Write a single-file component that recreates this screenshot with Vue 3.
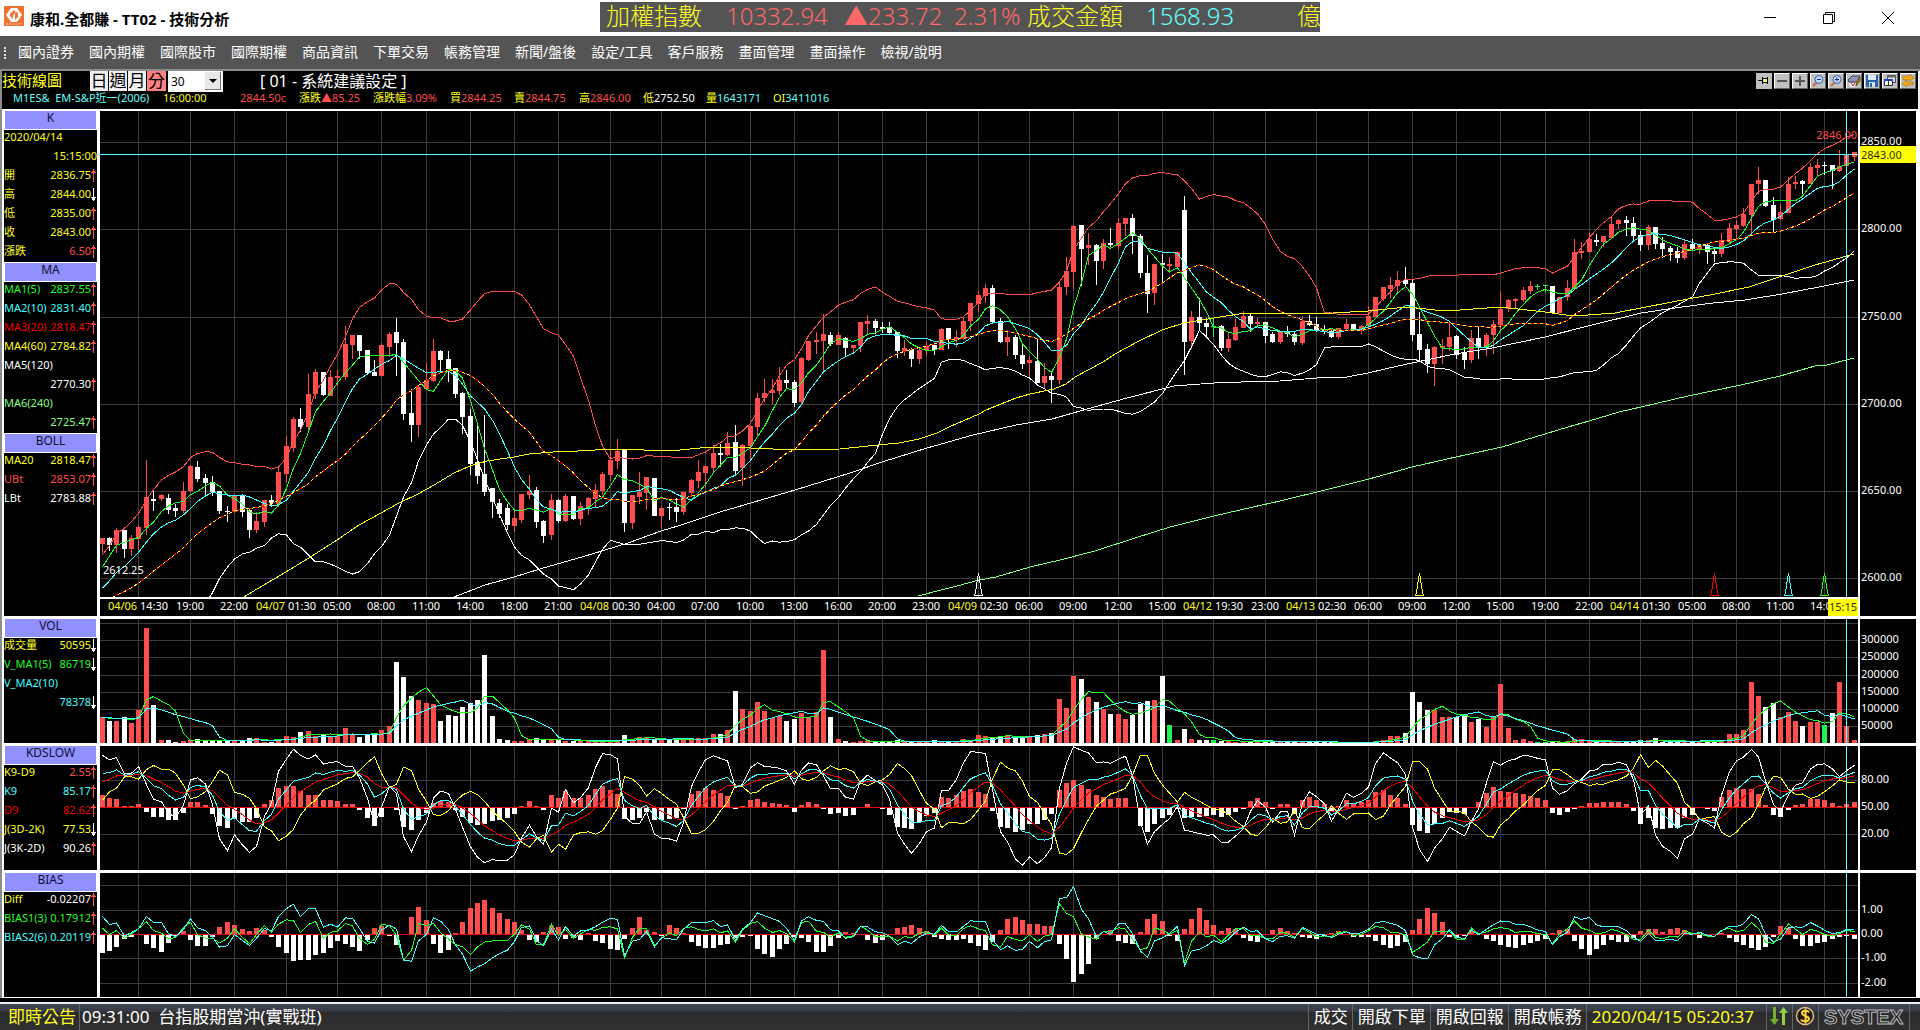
<script setup>
import { ref } from 'vue'

const menus = ['國內證券', '國內期權', '國際股市', '國際期權', '商品資訊', '下單交易', '帳務管理', '新聞/盤後', '設定/工具', '客戶服務', '畫面管理', '畫面操作', '檢視/說明']
const periods = ['日', '週', '月', '分']
const period = ref('分')
const minutes = ref('30')

const quote = [
  { label: '', value: 'M1ES&  EM-S&P近一(2006)', tone: 'aqua' },
  { label: '16:00:00', value: '', tone: 'red' },
  { label: '', value: '2844.50c', tone: 'red' },
  { label: '漲跌', value: '▲85.25', tone: 'red' },
  { label: '漲跌幅', value: '3.09%', tone: 'red' },
  { label: '買', value: '2844.25', tone: 'red' },
  { label: '賣', value: '2844.75', tone: 'red' },
  { label: '高', value: '2846.00', tone: 'red' },
  { label: '低', value: '2752.50', tone: 'white' },
  { label: '量', value: '1643171', tone: 'aqua' },
  { label: 'OI', value: '3411016', tone: 'aqua' },
]

// label, value, label tone, value tone, arrow
const kRows = [
  ['2020/04/14', '', 'yellow', 'yellow', ''],
  ['', '15:15:00', 'yellow', 'yellow', ''],
  ['開', '2836.75', 'yellow', 'yellow', 'up'],
  ['高', '2844.00', 'yellow', 'yellow', 'down'],
  ['低', '2835.00', 'yellow', 'yellow', 'up'],
  ['收', '2843.00', 'yellow', 'yellow', 'up'],
  ['漲跌', '6.50', 'yellow', 'red', 'up'],
]
const maRows = [
  ['MA1(5)', '2837.55', 'green', 'green', 'up'],
  ['MA2(10)', '2831.40', 'cyan', 'cyan', 'up'],
  ['MA3(20)', '2818.47', 'pure', 'pure', 'up'],
  ['MA4(60)', '2784.82', 'yellow', 'yellow', 'up'],
  ['MA5(120)', '', 'white', 'white', ''],
  ['', '2770.30', 'white', 'white', 'up'],
  ['MA6(240)', '', 'mint', 'mint', ''],
  ['', '2725.47', 'mint', 'mint', 'up'],
]
const bollRows = [
  ['MA20', '2818.47', 'yellow', 'yellow', 'up'],
  ['UBt', '2853.07', 'red', 'red', 'up'],
  ['LBt', '2783.88', 'white', 'white', 'up'],
]
const volRows = [
  ['成交量', '50595', 'yellow', 'yellow', 'down'],
  ['V_MA1(5)', '86719', 'green', 'green', 'down'],
  ['V_MA2(10)', '', 'cyan', 'cyan', ''],
  ['', '78378', 'cyan', 'cyan', 'down'],
]
const kdRows = [
  ['K9-D9', '2.55', 'yellow', 'red', 'up'],
  ['K9', '85.17', 'cyan', 'cyan', 'up'],
  ['D9', '82.62', 'pure', 'pure', 'up'],
  ['J(3D-2K)', '77.53', 'yellow', 'yellow', 'down'],
  ['J(3K-2D)', '90.26', 'white', 'white', 'up'],
]
const biasRows = [
  ['Diff', '-0.02207', 'yellow', 'white', 'up'],
  ['BIAS1(3)', '0.17912', 'green', 'green', 'up'],
  ['BIAS2(6)', '0.20119', 'cyan', 'cyan', 'up'],
]

// tone, high, body top, body bottom, low (thirds of a pixel, from the chunk's base)
const chunks = [
  [750, `r 865 865 881 910,w 860 865 884 902,r 835 840 884 908,w 840 840 896 923,r 855 864 896 918,r 825 831 866 900,
r 630 741 833 855,w 720 747 752 783,r 731 735 747 752,w 732 744 780 792,w 762 774 783 800,r 696 723 783 788,
r 645 648 723 725,w 632 651 687 696,w 672 684 699 737,w 678 697 725 737,w 723 723 783 792,w 768 782 786 815,
r 733 735 785 790,w 732 734 786 800,w 778 780 839 864,r 787 812 839 848,r 750 750 816 830,w 735 750 760 770,
r 652 666 762 770,r 558 588 671 695,r 501 507 594 606,w 474 507 531 545,r 372 432 531 543,r 357 366 432 447,
w 366 366 434 438,r 360 381 437 438,r 360 378 383 408,r 228 282 381 390,r 255 255 285 326,w 255 255 303 326,
w 300 300 368 372,w 330 366 377 378,r 279 285 378 380,r 246 252 291 320,w 204 246 279 378,w 267 276 491 510,
w 417 489 525 576,r 408 411 525 560,r 339 390 416 417,r 267 303 393 396,w 300 303 330 363,w 303 327 357 396,
w 354 354 432 444,w 426 429 501 552,w 477 498 641 675,w 520 636 678 702,w 495 672 725 738,w 714 714 756 804,
w 747 759 792 803,w 762 774 825 840,r 782 804 828 846,r 732 732 810 819,r 675 723 735 747,w 711 720 816 834,
w 810 813 857 879,r 732 750 855 870,w 747 750 813 819,r 732 738 812 816,w 738 738 806 810,r 756 768 807 825,
r 741 744 771 795,r 702 720 747 773,r 666 672 723 735,r 600 630 675 693,r 567 603 633 657,w 600 600 819 846,
r 735 735 819 837,r 666 726 740 762,r 681 682 729 780,w 684 684 797 798,r 768 774 797 837,w 759 770 773 810,
w 744 771 785 816,r 727 727 785 795,r 687 690 729 740,r 630 666 693 714`],
  [450, `r 948 948 968 1010,r 885 908 953 965,w 881 909 914 950,r 846 879 915 918,w 825 876 962 972,r 882 885 953 1007,
r 826 828 887 930,r 729 744 830 858,r 687 729 743 757,r 687 720 729 762,r 651 690 723 735,w 660 690 698 714,
w 690 696 758 770,r 621 624 756 762,r 572 573 630 633,r 546 570 575 612,r 492 552 573 662,w 547 555 582 587,
r 547 555 585 585,w 561 563 594 620,r 586 586 594 606,r 516 516 588 606,r 495 513 521 555,w 507 514 534 552,
w 516 531 537 550,w 516 531 550 552,w 546 546 602 624,r 570 594 603 618,w 594 596 626 650,r 597 599 626 642,
r 576 588 600 618,w 580 585 599 614,r 534 536 599 600,w 534 534 570 596,r 540 561 569 590,r 504 513 566 570,
r 459 459 513 542,r 422 435 461 485,r 402 414 437 459,w 405 414 515 518,w 503 513 576 578,r 546 561 576 618,
w 555 561 614 627,w 582 615 641 657,r 618 630 638 684,w 567 633 698 700,r 639 678 698 715,w 669 678 690 759,
r 399 411 689 702,r 321 363 410 434,r 225 228 365 417,w 225 225 296 408,r 249 285 293 345,w 282 285 333 405,
r 267 279 332 356,w 234 279 284 291,r 204 219 288 299,r 204 204 221 259,w 192 204 257 312,w 252 257 368 384,
w 315 369 431 489,r 342 342 429 465,w 312 339 345 400,r 321 342 347 368,r 303 306 351 354,w 138 180 576 675,
r 483 501 573 597,w 444 501 518 543,w 504 519 530 560,g 504 529 531 560,w 525 528 594 603,r 545 567 593 605,
r 507 531 570 573,r 483 498 533 534,w 492 498 522 546,r 504 516 521 531,w 516 516 557 579,w 546 552 576 578,
r 543 545 576 582,w 528 545 553 562,w 546 552 575 585`],
  [330, `r 618 632 698 704,w 615 633 645 648,w 622 642 659 665,w 645 658 664 672,w 658 662 681 684,r 654 655 681 686,
r 627 642 657 662,w 642 642 657 662,r 645 648 660 671,r 588 618 648 654,r 561 561 620 622,r 531 531 567 573,
r 501 525 537 563,r 483 510 528 545,w 471 510 522 531,w 510 519 674 693,w 606 672 719 755,w 702 717 762 789,
r 708 711 761 828,r 687 708 713 762,r 639 681 711 723,w 675 678 734 746,w 711 729 749 776,r 660 684 749 758,
w 650 684 712 747,r 669 675 711 738,r 630 642 674 732,r 543 597 644 660,r 567 570 596 605,r 563 567 572 594,
r 531 540 570 575,r 513 528 542 551,g 521 528 530 539,g 526 526 528 548,w 528 528 609 611,r 561 561 608 609,
r 510 534 562 573,r 387 426 537 540,r 396 423 429 447,r 369 387 426 428,w 372 389 397 408,r 378 378 396 411,
r 321 342 383 387,r 326 330 342 357,w 318 330 339 377,w 321 338 377 395,w 363 375 404 423,r 345 351 404 420,
w 351 351 402 417,w 381 399 416 444,w 408 414 426 453,w 411 423 444 459,r 387 402 443 450,w 387 402 416 417,
r 402 404 419 431,w 399 404 425 461,w 411 423 431 456,r 369 390 432 441,r 339 354 395 402,r 330 345 357 390,
r 294 312 348 351,r 222 222 314 376,r 171 210 221 252,w 210 210 288 290,w 261 285 329 368,r 282 306 327 329,
r 201 222 309 310,r 197 216 221 237,w 210 213 221 252,r 159 171 221 222,r 147 165 173 198,w 156 165 168 195,
w 165 165 182 237,r 120 167 183 186,r 132 135 168 170,r 125 126 141 152`],
]

const volumes = [
  79, 66, 66, 78, 60, 99, 345, 114, 9, 9, 3, 6, 9, 12, 6, 6, 6, 9, 6, 8, 15, 15, 3, 3, 12, 21, 18, 33, 36, 21,
  24, 21, 21, 45, 24, 18, 24, 27, 39, 51, 243, 198, 141, 129, 120, 117, 66, 84, 81, 108, 120, 129, 264, 81, 12, 9, 6, 6, 12, 15,
  12, 12, 9, 6, 6, 6, 5, 3, 3, 9, 9, 24, 12, 18, 14, 9, 9, 9, 9, 9, 10, 15, 15, 27, 27, 39, 156, 102, 96, 123,
  96, 75, 81, 66, 72, 90, 78, 93, 279, 78, 12, 6, 3, 6, 6, 3, 3, 4, 9, 5, 3, 3, 3, 9, 5, 4, 5, 12, 9, 24,
  21, 18, 21, 24, 18, 18, 18, 24, 27, 30, 132, 105, 201, 192, 138, 123, 102, 87, 87, 72, 84, 117, 126, 129, 201, 54, 9, 42, 12, 9,
  9, 9, 6, 5, 3, 6, 4, 6, 9, 3, 3, 3, 3, 6, 3, 2, 2, 2, 2, 2, 2, 2, 3, 6, 9, 21, 21, 30, 153, 123,
  99, 99, 78, 78, 78, 87, 63, 72, 48, 78, 177, 45, 9, 12, 6, 2, 2, 3, 2, 6, 12, 12, 5, 4, 4, 5, 5, 2, 3, 9,
  9, 15, 4, 4, 4, 5, 4, 4, 4, 9, 6, 27, 27, 39, 183, 141, 108, 120, 78, 93, 66, 51, 63, 63, 54, 90, 183, 51, 9,
]
const flatVolume = [145, 234]

// closes before the first visible bar, for the averages
const earlier = [1860, 1850, 1845, 1855, 1860, 1850, 1850, 1855, 1860, 1855, 1850, 1840, 1830, 1820, 1795, 1800, 1750, 1690, 1650]

const bars = chunks.flatMap(([base, text]) =>
  text.split(',').map((item) => {
    const [tone, ...n] = item.trim().split(' ')
    const [high, top, bottom, low] = n.map((v) => Number(v) + base)
    return { tone, high, top, bottom, low, close: tone === 'w' ? bottom : top }
  }),
)
const barX = (i) => Math.floor(2.15 + 7.362 * i)
const mainY = (v) => v / 3 - 111
const toPrice = (v) => 2850 - (v - 427) / 5.232
const toPoints = (values, y) => values.map((v, i) => `${barX(i) + 0.5},${y(v).toFixed(1)}`).join(' ')

const history = earlier.length
const closes = [...earlier, ...bars.map((b) => b.close)]
const highs = [...earlier.map((v) => v - 20), ...bars.map((b) => b.high)]
const lows = [...earlier.map((v) => v + 20), ...bars.map((b) => b.low)]

function average(list, end, n) {
  return list.slice(end - n + 1, end + 1).reduce((a, b) => a + b, 0) / n
}
const ma = (n) => bars.map((b, i) => average(closes, i + history, n))
const ma20 = ma(20)
const spread = bars.map((b, i) => {
  const part = closes.slice(i + history - 19, i + history + 1)
  return 2 * Math.sqrt(part.reduce((a, v) => a + (v - ma20[i]) ** 2, 0) / 20)
})

const mainLines = [
  { tone: 'green', points: toPoints(ma(5), mainY) },
  { tone: 'cyan', points: toPoints(ma(10), mainY) },
  { tone: 'pure', points: toPoints(ma20, mainY) },
  { tone: 'yellow dashed', points: toPoints(ma20, mainY) },
  { tone: 'red', points: toPoints(ma20.map((v, i) => v - spread[i]), mainY) },
  { tone: 'white', points: toPoints(ma20.map((v, i) => v + spread[i]), mainY) },
  {
    tone: 'yellow',
    points:
      '144,486 157,478 186,461 212,445 237,429 259,414 281,402 297,393 318,383 334,374 354,362 370,355 387,350 414,346 429,343 453,341 478,340 513,338 574,340 580,339 610,336 631,336 651,337 695,339 740,338 778,334 799,332 819,328 837,322 849,316 879,303 886,299 916,287 930,283 954,278 966,273 975,266 1003,251 1015,243 1039,230 1062,219 1084,212 1114,207 1145,202 1233,202 1268,200 1307,196 1335,199 1360,199 1400,196 1445,201 1466,204 1488,204 1515,202 1541,197 1572,191 1615,183 1649,176 1682,165 1715,154 1754,143',
  },
  {
    tone: 'white',
    points:
      '354,486 385,474 414,466 440,458 492,443 528,432 561,420 578,415 620,401 695,379 750,362 782,351 827,337 873,324 916,314 952,308 987,298 1027,287 1074,275 1114,272 1141,271 1180,270 1217,267 1247,266 1268,262 1298,255 1331,248 1355,243 1392,237 1445,226 1488,215 1541,202 1582,196 1613,192 1645,189 1682,183 1719,176 1754,169',
  },
  {
    tone: 'mint',
    points:
      '818,485 841,479 857,475 879,469 896,466 930,456 960,449 995,440 1035,427 1070,416 1114,405 1153,396 1180,390 1225,379 1269,368 1312,356 1356,346 1402,336 1445,323 1468,316 1489,310 1519,301 1541,296 1588,285 1641,274 1680,265 1715,255 1727,254 1754,247',
  },
]

const pastVolumes = [...Array(10).fill(76), ...volumes]
const volMa = (n) => volumes.map((v, i) => average(pastVolumes, i + 10, n))
const volY = (v) => 124 - v / 3
const volLines = [
  { tone: 'green', points: toPoints(volMa(5), volY) },
  { tone: 'cyan', points: toPoints(volMa(10), volY) },
]
const volBars = volumes.map((v, i) => ({
  x: barX(i) - 2,
  y: volY(v),
  h: v / 3,
  tone: flatVolume.includes(i) ? 'g' : bars[i].tone,
}))

// KD, 9 bars
const kd = []
let k = 88
let d = 78
bars.forEach((b, i) => {
  if (i > 0) {
    const at = i + history
    const top = Math.min(...highs.slice(at - 8, at + 1))
    const bottom = Math.max(...lows.slice(at - 8, at + 1))
    const rsv = ((bottom - b.close) / (bottom - top)) * 100
    k = (k * 2 + rsv) / 3
    d = (d * 2 + k) / 3
  }
  kd.push({ k, d })
})
const kdY = (v) => 61.5 - (v - 50) * 0.9
const kdLines = [
  { tone: 'yellow', points: toPoints(kd.map((p) => 3 * p.d - 2 * p.k), kdY) },
  { tone: 'white', points: toPoints(kd.map((p) => 3 * p.k - 2 * p.d), kdY) },
  { tone: 'pure', points: toPoints(kd.map((p) => p.d), kdY) },
  { tone: 'cyan', points: toPoints(kd.map((p) => p.k), kdY) },
]
const kdBars = kd.map((p, i) => signedBar(i, (p.k - p.d) * 1.2, 61))

const prices = closes.map(toPrice)
const bias = (n) =>
  bars.map((b, i) => {
    const mean = average(prices, i + history, n)
    return ((prices[i + history] - mean) / mean) * 100
  })
const bias1 = bias(3)
const bias2 = bias(6)
const biasY = (v) => 61.5 - v * 24.3
const biasLines = [
  { tone: 'green', points: toPoints(bias1, biasY) },
  { tone: 'cyan', points: toPoints(bias2, biasY) },
]
const biasBars = bias1.map((v, i) => signedBar(i, (v - bias2[i]) * 38, 61))

function signedBar(i, size, zero) {
  const h = Math.round(Math.abs(size))
  return { x: barX(i) - 2, y: size > 0 ? zero - h : zero + 1, h, tone: size > 0 ? 'r' : 'w' }
}

const times = [
  [5, '14:30', '04/06'], [12, '19:00'], [18, '22:00'], [25, '01:30', '04/07'], [32, '05:00'], [38, '08:00'], [44, '11:00'],
  [50, '14:00'], [56, '18:00'], [62, '21:00'], [69, '00:30', '04/08'], [76, '04:00'], [82, '07:00'], [88, '10:00'],
  [94, '13:00'], [100, '16:00'], [106, '20:00'], [112, '23:00'], [119, '02:30', '04/09'], [126, '06:00'], [132, '09:00'],
  [138, '12:00'], [144, '15:00'], [151, '19:30', '04/12'], [158, '23:00'], [165, '02:30', '04/13'], [172, '06:00'], [178, '09:00'],
  [184, '12:00'], [190, '15:00'], [196, '19:00'], [202, '22:00'], [209, '01:30', '04/14'], [216, '05:00'], [222, '08:00'],
  [228, '11:00'], [234, '14:00'],
]
const signals = [[119, 'white'], [179, 'yellow'], [219, 'pure'], [229, 'cyan'], [234, 'green']]
const cursorX = barX(237)

const lowerPanes = [
  {
    name: 'VOL', rows: volRows, bars: volBars, lines: volLines, grid: [4, 21, 38, 56, 73, 90, 107], zero: 0,
    labels: [[21, '300000'], [38, '250000'], [56, '200000'], [73, '150000'], [90, '100000'], [107, '50000']],
  },
  {
    name: 'KDSLOW', rows: kdRows, bars: kdBars, lines: kdLines, grid: [34, 88], zero: 61,
    labels: [[34, '80.00'], [61, '50.00'], [88, '20.00']],
  },
  {
    name: 'BIAS', rows: biasRows, bars: biasBars, lines: biasLines, grid: [12, 37, 85, 110], zero: 61,
    labels: [[37, '1.00'], [61, '0.00'], [85, '-1.00'], [110, '-2.00']],
  },
]
const priceLabels = [[31, '2850.00'], [118, '2800.00'], [206, '2750.00'], [293, '2700.00'], [380, '2650.00'], [467, '2600.00']]
const sideGroups = [
  { name: 'K', rows: kRows },
  { name: 'MA', rows: maRows },
  { name: 'BOLL', rows: bollRows },
]
const pct = (v, whole) => (v / whole) * 100 + '%'
</script>

<template>
  <div class="app">
    <header class="titlebar">
      <svg class="logo" width="20" height="20" viewBox="0 0 20 20">
        <rect width="20" height="20" fill="#f0722e" />
        <path d="M7 2h6l5 7-5 7H7L2 9z" fill="#fff" />
        <path d="M10 4l2 2-3 3v4l-3-3V8z M11 14l3-3V7l-3-2v4z" fill="#f0722e" />
        <path d="M2 18h16" stroke="#fbd0b8" stroke-dasharray="2 1" />
      </svg>
      <h1>康和.全都賺 - TT02 - 技術分析</h1>
      <div class="ticker">
        <span class="yellow">加權指數</span>
        <span class="rose">10332.94</span>
        <span class="rose">▲233.72</span>
        <span class="rose">2.31%</span>
        <span class="yellow">成交金額</span>
        <span class="aqua">1568.93</span>
        <span class="yellow">億</span>
      </div>
      <div class="window-buttons">
        <button aria-label="minimize"><svg width="14" height="14"><path d="M1 6.5h12" /></svg></button>
        <button aria-label="restore"><svg width="14" height="14"><path d="M1.5 3.5h9v9h-9zM3.5 3.5v-2h9v9h-2" /></svg></button>
        <button aria-label="close"><svg width="14" height="14"><path d="M1 1l12 12M13 1L1 13" /></svg></button>
      </div>
    </header>

    <nav class="menubar">
      <i class="grip"></i>
      <button v-for="m in menus" :key="m">{{ m }}</button>
    </nav>

    <section class="chart-head">
      <div class="tools">
        <h2>技術線圖</h2>
        <div class="periods">
          <button v-for="p in periods" :key="p" :class="{ active: p === period }" @click="period = p">{{ p }}</button>
        </div>
        <div class="minutes">
          <select v-model="minutes" aria-label="minutes">
            <option>5</option>
            <option>30</option>
            <option>60</option>
          </select>
          <svg width="15" height="17"><path d="M4 7h8l-4 4z" /></svg>
        </div>
        <span class="preset">[ 01 - 系統建議設定 ]</span>
        <div class="icons">
          <button class="flat" aria-label="pin">
            <svg width="16" height="16" shape-rendering="crispEdges"><path d="M2 7h5v1H2zM6 4h1v7H6zM7 5h1v1H7zM7 9h1v1H7zM8 5h3v1H8zM8 9h3v1H8zM11 4h1v7h-1z" /><path d="M8 6h3v3H8z" fill="#ffff60" /></svg>
          </button>
          <button aria-label="shrink"><svg width="14" height="14"><path d="M2 7h10" stroke="#555" stroke-width="2" /></svg></button>
          <button aria-label="expand"><svg width="14" height="14"><path d="M2 7h10M7 2v10" stroke="#555" stroke-width="2" /></svg></button>
          <button aria-label="zoom out">
            <svg width="14" height="14"><path d="M2 12l4-4" stroke="#c07030" stroke-width="2" /><circle cx="8" cy="5.5" r="4" fill="#b8d8ff" stroke="#4060a0" /><path d="M6 5.5h4" stroke="#203080" /></svg>
          </button>
          <button aria-label="zoom in">
            <svg width="14" height="14"><path d="M2 12l4-4" stroke="#c07030" stroke-width="2" /><circle cx="8" cy="5.5" r="4" fill="#b8d8ff" stroke="#4060a0" /><path d="M6 5.5h4M8 3.5v4" stroke="#203080" /></svg>
          </button>
          <button aria-label="print">
            <svg width="14" height="14"><path d="M1 6l4-4h8l-3 6H2z" fill="#9090b8" stroke="#404050" /><path d="M10 8l3-5v4l-4 5z" fill="#c0a030" stroke="#605010" /><path d="M2 9h7l-2 4H4z" fill="#fff" /><path d="M4 9l2 3 2-3" stroke="#e02020" fill="none" /></svg>
          </button>
          <button aria-label="save">
            <svg width="14" height="14"><path d="M1 1h12v12H2l-1-1z" fill="#2860b0" /><path d="M3 1h8v5H3z" fill="#d8e8ff" /><path d="M4 8h6v5H4z" fill="#e0e0e0" /><path d="M5 9h2v4H5z" fill="#2860b0" /></svg>
          </button>
          <button aria-label="windows">
            <svg width="14" height="14"><path d="M4.5 1.5h8v7h-8z" fill="#ddd" stroke="#444" /><path d="M4 2.5h9" stroke="#666" stroke-width="2" /><path d="M1.5 5.5h8v6h-8z" fill="#fff" stroke="#333" /><path d="M1 6h9" stroke="#2040e0" stroke-width="2" /><path d="M5.5 6v6" stroke="#333" /></svg>
          </button>
          <button aria-label="swap">
            <svg width="14" height="14"><path d="M2 2h7V0l4 4-4 3V6H2zM12 8H6V6L1 10l5 3v-2h6z" fill="#f0a818" stroke="#a06808" stroke-width=".5" /></svg>
          </button>
        </div>
      </div>
      <div class="quote">
        <span v-for="q in quote" :key="q.label + q.value" :class="q.tone"><b>{{ q.label }}</b>{{ q.value }}</span>
      </div>
    </section>

    <main class="board">
      <section class="pane main-pane">
        <aside class="side">
          <template v-for="g in sideGroups" :key="g.name">
            <h3>{{ g.name }}</h3>
            <p v-for="(r, i) in g.rows" :key="i">
              <span :class="r[2]">{{ r[0] }}</span>
              <span class="value" :class="r[3]">{{ r[1] }}</span>
              <svg v-if="r[4] === 'up'" class="arrow" width="5" height="13"><path d="M2 0h1v13H2zM1 2h3v1H1zM0 3h5v1H0z" fill="#ff4c4c" /></svg>
              <svg v-else-if="r[4] === 'down'" class="arrow" width="5" height="13"><path d="M2 0h1v13H2zM0 9h5v1H0zM1 10h3v2H1z" fill="#fff" /></svg>
            </p>
          </template>
        </aside>
        <div class="center">
          <div class="plot">
            <svg viewBox="0 0 1758 486" preserveAspectRatio="none" shape-rendering="crispEdges">
              <g class="grid">
                <rect v-for="t in times" :key="t[0]" :x="barX(t[0])" y="0" width="1" height="486" />
                <rect v-for="l in priceLabels" :key="l[0]" x="0" :y="l[0]" width="1758" height="1" />
              </g>
              <g v-for="(b, i) in bars" :key="i" :class="'bar-' + b.tone">
                <rect :x="barX(i)" :y="mainY(b.high)" width="1" :height="(b.low - b.high) / 3" />
                <rect :x="barX(i) - 2" :y="mainY(b.top)" width="5" :height="Math.max(1, (b.bottom - b.top) / 3)" />
              </g>
              <polyline v-for="(l, i) in mainLines" :key="i" class="line" :class="l.tone" :points="l.points" />
              <path v-for="s in signals" :key="s[0]" class="line" :class="s[1]" :transform="`translate(${barX(s[0]) + 0.5} 0)`" d="M0 462L-3 481L-4 484.5H4L3 481Z" />
              <rect class="cursor" x="0" y="43" width="1758" height="1" />
              <rect class="cursor" :x="cursorX" y="0" width="1" height="486" />
            </svg>
            <span class="mark low">2612.25</span>
            <span class="mark high">2846.00</span>
          </div>
          <div class="times">
            <span v-for="t in times" :key="t[0]" :style="{ left: pct(barX(t[0]), 1758) }"><b v-if="t[2]">{{ t[2] + ' ' }}</b>{{ t[1] }}</span>
            <em>15:15</em>
          </div>
        </div>
        <div class="axis">
          <div class="scale">
            <span v-for="l in priceLabels" :key="l[0]" :style="{ top: pct(l[0], 486) }">{{ l[1] }}</span>
            <em :style="{ top: pct(43, 486) }">2843.00</em>
          </div>
        </div>
      </section>

      <section v-for="pane in lowerPanes" :key="pane.name" class="pane">
        <aside class="side">
          <h3>{{ pane.name }}</h3>
          <p v-for="(r, i) in pane.rows" :key="i">
            <span :class="r[2]">{{ r[0] }}</span>
            <span class="value" :class="r[3]">{{ r[1] }}</span>
            <svg v-if="r[4] === 'up'" class="arrow" width="5" height="13"><path d="M2 0h1v13H2zM1 2h3v1H1zM0 3h5v1H0z" fill="#ff4c4c" /></svg>
            <svg v-else-if="r[4] === 'down'" class="arrow" width="5" height="13"><path d="M2 0h1v13H2zM0 9h5v1H0zM1 10h3v2H1z" fill="#fff" /></svg>
          </p>
        </aside>
        <div class="center">
          <div class="plot">
            <svg viewBox="0 0 1758 124" preserveAspectRatio="none" shape-rendering="crispEdges">
              <g class="grid">
                <rect v-for="t in times" :key="t[0]" :x="barX(t[0])" y="0" width="1" height="124" />
                <rect v-for="y in pane.grid" :key="y" x="0" :y="y" width="1758" height="1" />
              </g>
              <rect v-for="(b, i) in pane.bars" :key="i" :class="'bar-' + b.tone" :x="b.x" :y="b.y" width="5" :height="b.h" />
              <rect v-if="pane.zero" class="zero" x="0" :y="pane.zero" width="1758" height="1" />
              <polyline v-for="(l, i) in pane.lines" :key="i" class="line" :class="l.tone" :points="l.points" />
              <rect class="cursor" :x="cursorX" y="0" width="1" height="124" />
            </svg>
          </div>
        </div>
        <div class="axis">
          <div class="scale">
            <span v-for="l in pane.labels" :key="l[0]" :style="{ top: pct(l[0], 124) }">{{ l[1] }}</span>
          </div>
        </div>
      </section>
    </main>

    <footer class="status">
      <span class="yellow notice">即時公告</span>
      <span class="news">09:31:00&nbsp; 台指股期當沖(實戰班)</span>
      <button>成交</button>
      <button>開啟下單</button>
      <button>開啟回報</button>
      <button>開啟帳務</button>
      <span class="cell date yellow">2020/04/15 05:20:37</span>
      <span class="cell icon">
        <svg width="20" height="20"><path d="M4 1h3v12h3l-4.500 6L1 13h3z" fill="#6fae2e" /><path d="M13 19h3V7h3l-4.500-6L10 7h3z" fill="#8ed04a" /></svg>
      </span>
      <span class="cell icon">
        <svg width="20" height="20"><circle cx="10" cy="10" r="8.5" fill="#20180c" stroke="#e0c088" stroke-width="1.5" /><path d="M14 6.500C13 4 7 4 7 7.200S14 9.500 14 12.700 7.500 16 6 13.500M10.500 2.500v15" fill="none" stroke="#ffd23c" stroke-width="2" /></svg>
      </span>
      <span class="cell brand">SYSTEX</span>
    </footer>
  </div>
</template>

<style>
body {
  margin: 0;
  background: #000;
}
</style>

<style scoped>
.app {
  display: flex;
  flex-direction: column;
  min-height: 100vh;
  background: #000;
  color: #fff;
  font-family: 'Noto Sans', 'Noto Sans CJK TC', sans-serif;
  font-size: 11px;
  overflow: hidden;
}
button {
  font: inherit;
  color: inherit;
  background: none;
  border: 0;
  padding: 0;
  margin: 0;
}
h1, h2, h3, p {
  margin: 0;
  font-weight: normal;
}
b, em, i {
  font-weight: normal;
  font-style: normal;
}
.yellow { color: #ffff20; }
.red { color: #ff4c4c; }
.pure { color: #f00000; }
.rose { color: #ff6868; }
.aqua { color: #60ffff; }
.cyan { color: #40ffff; }
.green { color: #20ff20; }
.mint { color: #80ff80; }
.white { color: #fff; }

.titlebar {
  display: flex;
  height: 36px;
  background: #fff;
  color: #000;
}
.logo {
  margin: 6px 6px 0 4px;
}
.titlebar h1 {
  width: 570px;
  font-size: 15px;
  font-weight: bold;
  line-height: 38px;
}
.ticker {
  display: grid;
  grid-template-columns: 120px 118px 110px 73px 119px 151px 23px;
  box-sizing: border-box;
  width: 720px;
  height: 30px;
  margin-top: 2px;
  padding-left: 6px;
  background: #545454;
  font-size: 24px;
  font-weight: 300;
  line-height: 28px;
  white-space: nowrap;
}
.window-buttons {
  display: flex;
  gap: 45px;
  margin-left: auto;
  padding-right: 25px;
}
.window-buttons svg {
  display: block;
  fill: none;
  stroke: #000;
}

.menubar {
  display: flex;
  gap: 15px;
  height: 33px;
  padding-left: 4px;
  background: #545454;
  border-bottom: 2px solid #8c8c8c;
  font-size: 14px;
  line-height: 32px;
}
.menubar button {
  height: 32px;
}
.menubar .grip {
  width: 0;
  height: 12px;
  margin: 11px -3px 0 0;
  border-left: 2px dotted #ddd;
}

.chart-head {
  height: 38px;
  border: solid #8c8c8c;
  border-width: 0 0 0 2px;
  box-shadow: inset -2px 0 #eee;
}
.tools {
  display: flex;
  height: 21px;
}
.tools h2 {
  width: 88px;
  color: #ffff20;
  font-size: 15px;
  line-height: 19px;
}
.periods {
  display: flex;
  gap: 1px;
}
.periods button {
  width: 18px;
  height: 20px;
  background: #f0f0f0;
  color: #000;
  font-size: 17px;
  line-height: 18px;
}
.periods button.active {
  width: 19px;
  background: #ff8080;
}
.minutes {
  position: relative;
  margin-left: 2px;
}
.minutes select {
  appearance: none;
  display: block;
  width: 55px;
  height: 21px;
  padding: 0 0 0 3px;
  border: 0;
  border-radius: 0;
  background: #fff;
  font-family: inherit;
  font-size: 12px;
  color: #000;
}
.minutes svg {
  position: absolute;
  right: 2px;
  top: 1px;
  background: #e8e8e8;
  border-right: 1px solid #777;
  border-bottom: 1px solid #777;
  pointer-events: none;
}
.preset {
  margin-left: 37px;
  font-size: 16px;
  line-height: 21px;
}
.icons {
  display: flex;
  gap: 2px;
  margin: 2px 4px 0 auto;
}
.icons button {
  box-sizing: border-box;
  width: 16px;
  height: 16px;
  background: #c0c0c0;
  border: 1px solid #fff;
  border-right-color: #666;
  border-bottom-color: #666;
}
.icons button.flat {
  border: 0;
}
.icons svg {
  display: block;
}
.quote {
  display: grid;
  grid-template-columns: 150px 77px 59px 74px 77px 64px 65px 64px 63px 67px auto;
  padding-left: 11px;
  line-height: 11px;
  white-space: pre;
}
.quote b {
  color: #ffff20;
}

.board {
  flex: 1;
  display: flex;
  flex-direction: column;
  gap: 3px;
  padding: 2px 4px 1px 2px;
  border-left: 2px solid #8c8c8c;
  background: #fff;
}
.pane {
  flex: 124 1 124px;
  display: flex;
}
.main-pane {
  flex: 505 1 505px;
}
.side {
  width: 93px;
  margin-right: 3px;
  background: #000;
}
.side h3 {
  height: 18px;
  margin: 0;
  background: #9090ff;
  border: solid #fff;
  border-width: 0 1px 1px;
  box-shadow: 0 -1px #fff;
  color: #101030;
  font-size: 12px;
  line-height: 14px;
  text-align: center;
}
.side p {
  display: flex;
  height: 19px;
  line-height: 13px;
  white-space: nowrap;
}
.side .value {
  margin-left: auto;
}
.side .arrow {
  margin: 1px 1px 0 0;
}
.center {
  flex: 1;
  display: flex;
  flex-direction: column;
  gap: 2px;
  margin-right: 2px;
}
.plot {
  position: relative;
  flex: 1;
  background: #000;
}
.plot svg {
  position: absolute;
  width: 100%;
  height: 100%;
}
.mark {
  position: absolute;
  line-height: 13px;
}
.mark.low {
  left: 3px;
  bottom: 21px;
}
.mark.high {
  right: 1px;
  top: 17px;
  color: #ff4c4c;
}
.times {
  position: relative;
  height: 17px;
  background: #000;
  line-height: 13px;
}
.times span {
  position: absolute;
  transform: translateX(-50%);
  white-space: pre;
}
.times b {
  color: #ffff20;
}
.times em {
  position: absolute;
  right: 0;
  width: 30px;
  height: 17px;
  background: #ffff00;
  color: #303000;
  line-height: 15px;
  text-align: center;
}
.axis {
  width: 56px;
  background: #000;
}
.main-pane .axis {
  padding-bottom: 19px;
  box-sizing: border-box;
}
.scale {
  position: relative;
  height: 100%;
}
.scale span {
  position: absolute;
  left: 1px;
  line-height: 16px;
  transform: translateY(-9px);
}
.scale em {
  position: absolute;
  width: 100%;
  padding-left: 1px;
  box-sizing: border-box;
  background: #ffff00;
  color: #303000;
  line-height: 17px;
  transform: translateY(-8px);
}
.grid rect { fill: #3c3c3c; }
.bar-r { fill: #ff4c4c; }
.bar-w { fill: #fff; }
.bar-g { fill: #20f050; }
.zero { fill: #f00000; }
.cursor { fill: #60ffff; }
.line {
  fill: none;
  stroke: currentColor;
  stroke-width: 1px;
}
.dashed {
  stroke-dasharray: 3 3;
}

.status {
  display: flex;
  height: 26px;
  margin-top: 4px;
  border-top: 2px solid #eee;
  background: linear-gradient(#414553, #363944 30%, #2b2b2b 31%, #303030);
  font-size: 17px;
  line-height: 26px;
  white-space: nowrap;
}
.notice {
  width: 71px;
  padding-left: 8px;
}
.news {
  margin-right: auto;
  padding-left: 2px;
  border-left: 1px solid #666;
}
.status button,
.cell {
  padding: 0 4px 0 5px;
  border-left: 1px solid #666;
}
.cell.date {
  padding-right: 12px;
}
.cell.icon {
  padding: 2px 3px 0 2px;
}
.cell.icon svg {
  display: block;
}
.brand {
  margin-right: 10px;
  padding-right: 6px;
  border-right: 1px solid #666;
  color: #222;
  font-family: 'Liberation Sans', sans-serif;
  font-size: 20px;
  font-weight: bold;
  -webkit-text-stroke: 1px #bbb;
}
</style>
